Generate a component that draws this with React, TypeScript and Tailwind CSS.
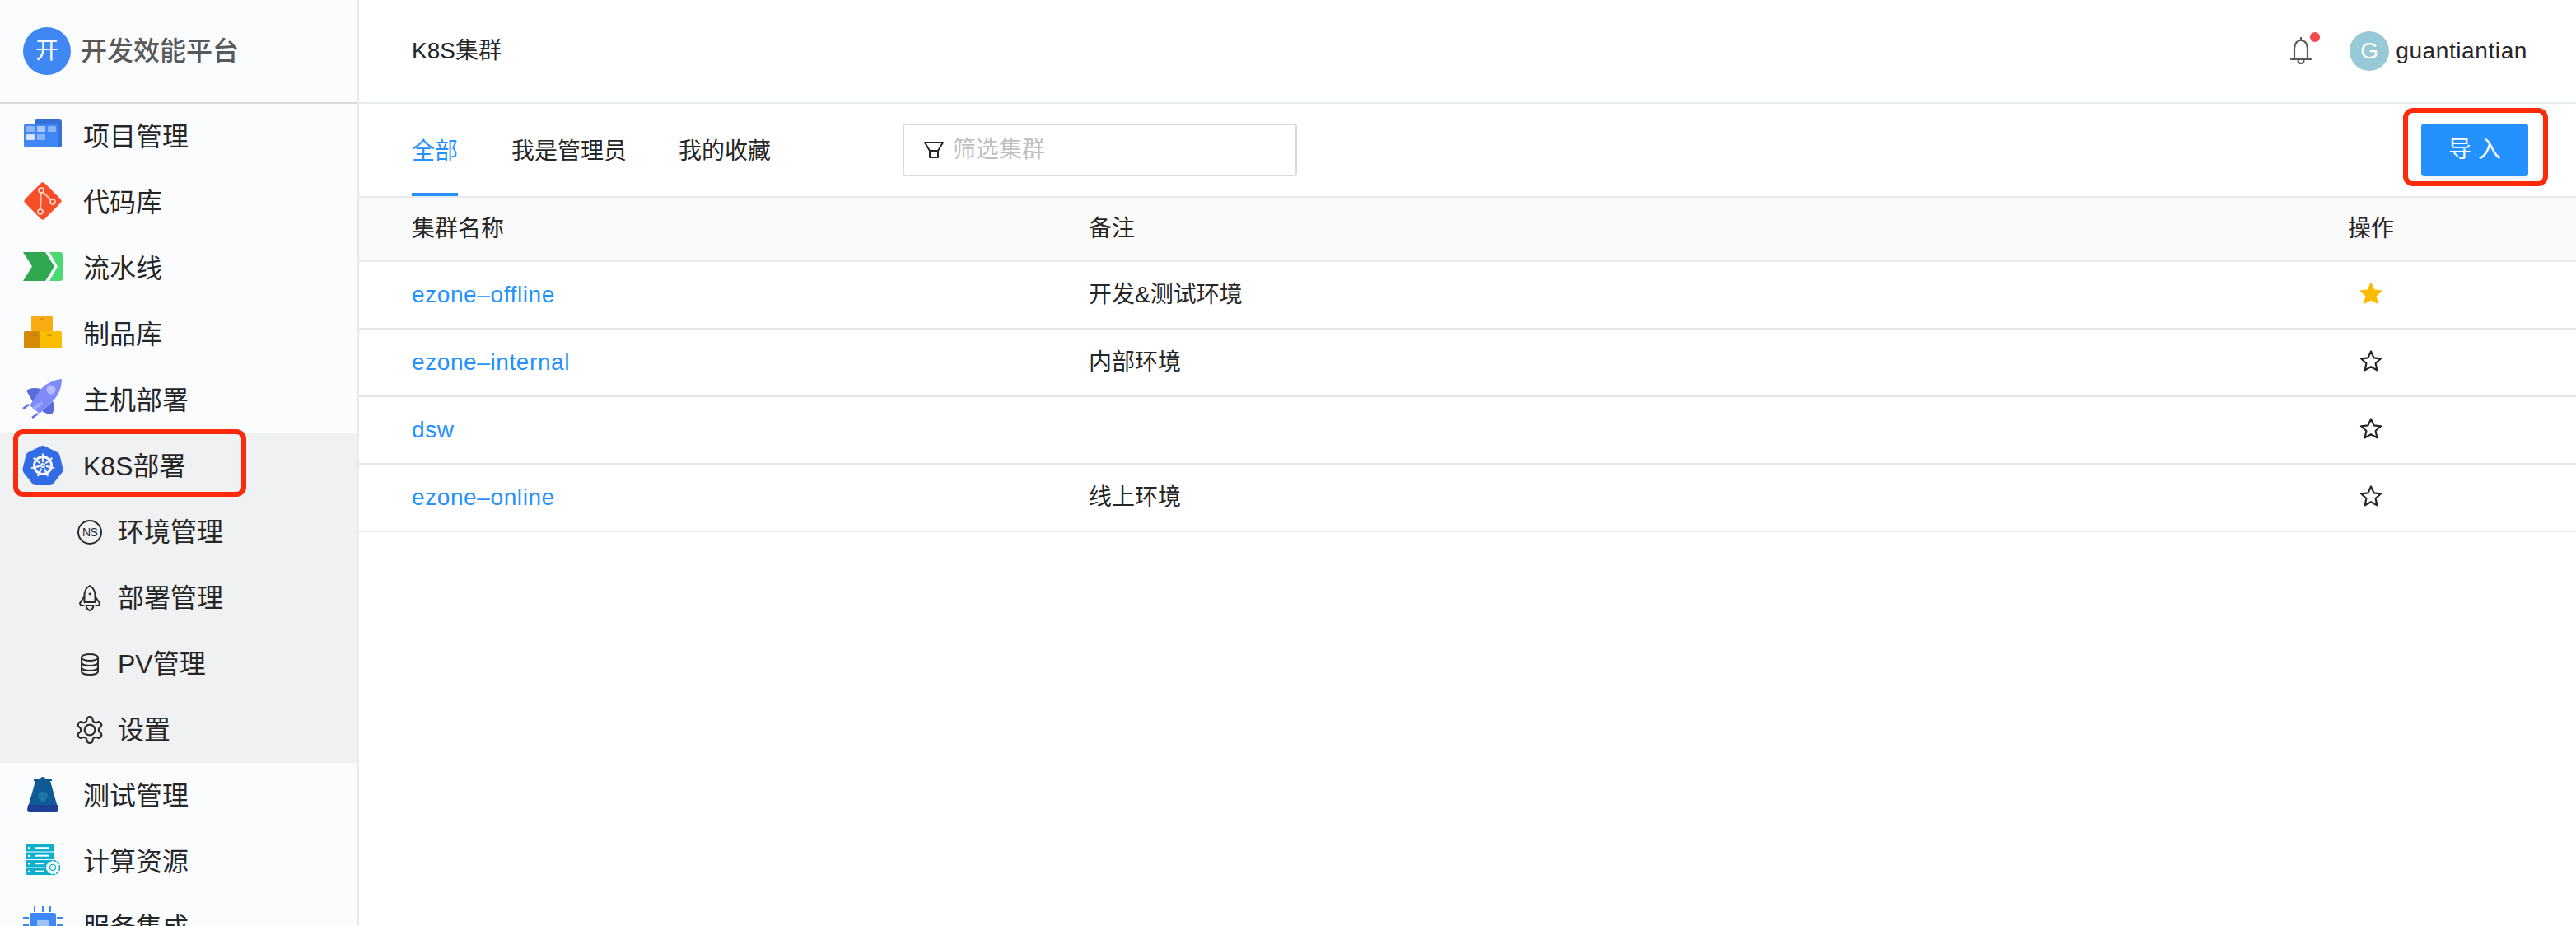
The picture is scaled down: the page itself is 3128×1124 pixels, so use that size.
import type { ReactNode } from "react";

const ProjectIcon = () => (
  <svg viewBox="0 0 48 48" className="h-12 w-12 overflow-visible">
    <path d="M14 6a3 3 0 0 1 3-3h27a3 3 0 0 1 3 3v28a3 3 0 0 1-3 3H20z" fill="#3470d8" />
    <path d="M1 11a3 3 0 0 1 3-3h39v26a3 3 0 0 1-3 3H4a3 3 0 0 1-3-3z" fill="#3f87f5" />
    <rect x="4" y="11" width="10" height="7" rx="1" fill="#8ab6f9" />
    <rect x="17" y="11" width="10" height="7" rx="1" fill="#a9c9fb" />
    <rect x="30" y="11" width="10" height="7" rx="1" fill="#8ab6f9" />
    <rect x="4" y="21" width="10" height="7" rx="1" fill="#d7e6fd" />
    <rect x="17" y="21" width="10" height="7" rx="1" fill="#8ab6f9" />
  </svg>
);

const CodeIcon = () => (
  <svg viewBox="0 0 48 48" className="h-12 w-12 overflow-visible">
    <rect x="7" y="5" width="34" height="34" rx="4" fill="#f74f28" transform="rotate(45 24 22)" />
    <path d="M22 9l-1 26M22 9l14 14" stroke="#fbc4b6" strokeWidth="2" fill="none" />
    <circle cx="22" cy="9" r="3" fill="#f74f28" stroke="#fde0d8" strokeWidth="1.6" />
    <circle cx="36" cy="23" r="3" fill="#f74f28" stroke="#fde0d8" strokeWidth="1.6" />
    <circle cx="21" cy="35" r="3" fill="#f74f28" stroke="#fde0d8" strokeWidth="1.6" />
  </svg>
);

const PipelineIcon = () => (
  <svg viewBox="0 0 48 48" className="h-12 w-12 overflow-visible">
    <path d="M32 4h13a3 3 0 0 1 3 3v29a3 3 0 0 1-3 3H32l10-17.5z" fill="#4cd972" />
    <path d="M0 4h27l11 17.5L27 39H0l11-17.5z" fill="#2fa84f" />
  </svg>
);

const PackageIcon = () => (
  <svg viewBox="0 0 48 48" className="h-12 w-12 overflow-visible">
    <rect x="10" y="1" width="26" height="19" rx="1.5" fill="#fbab14" />
    <rect x="1" y="20" width="21" height="21" rx="1.5" fill="#d58a05" />
    <rect x="21" y="20" width="26" height="21" rx="1.5" fill="#fbbd00" />
    <path d="M20 5h6M10 25h7M29 25h6" stroke="#b8790c" strokeWidth="1.2" />
  </svg>
);

const RocketIcon = () => (
  <svg viewBox="0 0 48 48" className="h-12 w-12 overflow-visible">
    <path d="M4 12c4-3 10-4 18-2L12 26z" fill="#5a6bdc" />
    <path d="M36 25c3 5 2 11-1 16-3 0-7-1-12-4z" fill="#5a6bdc" />
    <path d="M47 -2c0 12-5 21-12 28L20 40 8 30 22 10C28 3 38 -1 47 -2z" fill="#7e8cfb" />
    <circle cx="34" cy="11" r="5.5" fill="#b4bcfd" />
    <path d="M11 33l11-8 2 3-10 8z" fill="#a0abfc" />
    <path d="M0 34l7-5M11 45l7-5" stroke="#5a6bdc" strokeWidth="2.4" />
  </svg>
);

const K8sIcon = () => {
  const spokes = [0, 51.4, 102.8, 154.3, 205.7, 257.1, 308.6];
  return (
    <svg viewBox="0 0 48 48" className="h-12 w-12 overflow-visible">
      <path d="M21.8 -0.6a5 5 0 0 1 4.4 0l15.6 7.5a5 5 0 0 1 2.7 3.4l3.9 16.8a5 5 0 0 1-1 4.3L36.7 45a5 5 0 0 1-3.9 1.9H15.2a5 5 0 0 1-3.9-1.9L.6 31.4a5 5 0 0 1-1-4.3l3.9-16.8a5 5 0 0 1 2.7-3.4z" fill="#326ce5" />
      <circle cx="24" cy="23" r="10.5" fill="none" stroke="#f2f5fd" strokeWidth="3" />
      <circle cx="24" cy="23" r="3" fill="#f2f5fd" />
      <circle cx="24" cy="23" r="1" fill="#326ce5" />
      {spokes.map((a) => (
        <path key={a} d="M24 8.5v10.5" stroke="#f2f5fd" strokeWidth="2.2" transform={`rotate(${a} 24 23)`} />
      ))}
    </svg>
  );
};

const FlaskIcon = () => (
  <svg viewBox="0 0 48 48" className="h-12 w-12 overflow-visible">
    <circle cx="24" cy="4" r="3" fill="#0e5a94" />
    <path d="M13 4h22v2h-2l9 32H6L15 6h-2z" fill="#0e5a94" />
    <path d="M6 35h36l1 6a3 3 0 0 1-3 3H8a3 3 0 0 1-3-3z" fill="#1f3f94" />
    <path d="M24 19c4 0 6 2 6 5 0 3-3 5-4 7h-4c-1-2-4-4-4-7 0-3 2-5 6-5z" fill="#1d76a8" />
  </svg>
);

const ComputeIcon = () => (
  <svg viewBox="0 0 48 48" className="h-12 w-12 overflow-visible">
    {[3, 12.5, 22, 31.5].map((y, i) => (
      <g key={y}>
        <rect x="4" y={y} width="34" height="8.5" fill="#0fb0ce" />
        <rect x="6" y={y + 3.2} width="2.2" height="2.2" fill="#fff" />
        <rect x="14" y={y + 3.2} width={i < 2 ? 18 : 11} height="2" fill="#fff" />
      </g>
    ))}
    <circle cx="36" cy="31" r="8.5" fill="#fff" stroke="#0fb0ce" strokeWidth="1.6" strokeDasharray="4 1" />
    <circle cx="36" cy="31" r="3.6" fill="none" stroke="#0fb0ce" strokeWidth="1.4" />
  </svg>
);

const ChipIcon = () => (
  <svg viewBox="0 0 48 48" className="h-12 w-12 overflow-visible">
    <rect x="8" y="6" width="32" height="32" rx="3" fill="#3f87f5" />
    <rect x="17" y="15" width="14" height="14" rx="1" fill="#9cc2fa" />
    <path d="M14 -2v7M24 -2v7M33 -2v7M0 12h7M41 12h7M0 21h7M41 21h7" stroke="#3f87f5" strokeWidth="2" />
  </svg>
);

const NsIcon = () => (
  <div className="flex h-[30px] w-[30px] items-center justify-center rounded-full border-2 border-[#2b2b2b] text-[14px] tracking-tighter text-[#2b2b2b]">
    NS
  </div>
);

const DeployIcon = () => (
  <svg viewBox="0 0 26 32" className="h-8 w-[26px]" fill="none" stroke="#2b2b2b" strokeWidth="2" strokeLinejoin="round">
    <path d="M13 1c4 2.500 6.500 6.500 6.500 11v9h-13v-9C6.500 7.500 9 3.500 13 1z" />
    <path d="M6.500 14L1 22l1 3h4.500M19.500 14L25 22l-1 3h-4.500" />
    <path d="M8.500 25c.5 3 2.500 5.500 4.500 6 2-.5 4-3 4.500-6z" />
    <circle cx="13" cy="11" r="1.4" fill="#2b2b2b" stroke="none" />
  </svg>
);

const DbIcon = () => (
  <svg viewBox="0 0 22 27" className="h-[27px] w-[22px]" fill="none" stroke="#2b2b2b" strokeWidth="2">
    <ellipse cx="11" cy="5" rx="10" ry="4" />
    <path d="M1 5v17c0 2.500 4.500 4 10 4s10-1.500 10-4V5" />
    <path d="M1 11c0 2.500 4.500 4 10 4s10-1.500 10-4M1 17c0 2.500 4.500 4 10 4s10-1.500 10-4" />
  </svg>
);

const GearIcon = () => (
  <svg viewBox="0 0 24 24" className="h-[38px] w-[38px]" fill="none" stroke="#2b2b2b" strokeWidth="1.4" strokeLinejoin="round">
    <path d="M12.22 2h-.44a2 2 0 0 0-2 2v.18a2 2 0 0 1-1 1.73l-.43.25a2 2 0 0 1-2 0l-.15-.08a2 2 0 0 0-2.73.73l-.22.38a2 2 0 0 0 .73 2.73l.15.1a2 2 0 0 1 1 1.72v.51a2 2 0 0 1-1 1.74l-.15.09a2 2 0 0 0-.73 2.73l.22.38a2 2 0 0 0 2.73.73l.15-.08a2 2 0 0 1 2 0l.43.25a2 2 0 0 1 1 1.73V20a2 2 0 0 0 2 2h.44a2 2 0 0 0 2-2v-.18a2 2 0 0 1 1-1.73l.43-.25a2 2 0 0 1 2 0l.15.08a2 2 0 0 0 2.73-.73l.22-.39a2 2 0 0 0-.73-2.73l-.15-.08a2 2 0 0 1-1-1.74v-.5a2 2 0 0 1 1-1.74l.15-.09a2 2 0 0 0 .73-2.73l-.22-.38a2 2 0 0 0-2.73-.73l-.15.08a2 2 0 0 1-2 0l-.43-.25a2 2 0 0 1-1-1.73V4a2 2 0 0 0-2-2z" />
    <circle cx="12" cy="12" r="4" />
  </svg>
);

const BellIcon = () => (
  <svg viewBox="0 0 26 34" className="h-[34px] w-[26px]" fill="none" stroke="#595959" strokeWidth="2.2" strokeLinecap="round">
    <path d="M13 1v3" />
    <path d="M5 27V14C5 8 8.500 4 13 4s8 4 8 10v13" />
    <path d="M1 27h24" />
    <path d="M9.500 28.500a3.500 3.500 0 0 0 7 0" />
  </svg>
);

const FilterIcon = () => (
  <svg viewBox="0 0 24 20" className="h-5 w-6" fill="none" stroke="#262626" strokeWidth="2" strokeLinejoin="round">
    <path d="M1 1h22l-6 10v8H7v-8z" />
    <path d="M7 11h10" />
  </svg>
);

const StarIcon = ({ filled }: { filled?: boolean }) => (
  <svg viewBox="0 0 28 28" className="h-7 w-7" fill={filled ? "#fdbb00" : "none"} stroke={filled ? "#fdbb00" : "#262626"} strokeWidth="2.2" strokeLinejoin="round">
    <path d="M14 2.500l3.500 7.900 8.500.9-6.400 5.700 1.800 8.400L14 21.200l-7.400 4.200 1.800-8.400L2 11.300l8.500-.9z" />
  </svg>
);

function NavItem({ icon, label }: { icon: ReactNode; label: string }) {
  return (
    <div className="flex h-20 shrink-0 items-center pl-7">
      <div className="flex w-[73px] shrink-0">{icon}</div>
      <span>{label}</span>
    </div>
  );
}

function SubItem({ icon, label }: { icon: ReactNode; label: string }) {
  return (
    <div className="flex h-20 shrink-0 items-center pl-[90px]">
      <div className="flex w-[38px] shrink-0 justify-center">{icon}</div>
      <span className="ml-[15px]">{label}</span>
    </div>
  );
}

const rows = [
  { name: "ezone–offline", note: "开发&测试环境", starred: true },
  { name: "ezone–internal", note: "内部环境" },
  { name: "dsw", note: "" },
  { name: "ezone–online", note: "线上环境" },
];

export default function App() {
  return (
    <div className="relative flex h-[1124px] w-[3128px] overflow-hidden bg-white font-['Liberation_Sans','Noto_Sans_CJK_SC',sans-serif] text-[28px] text-[#262626]">
      <aside className="flex w-[436px] shrink-0 flex-col border-r-2 border-[#e8eaed] bg-[#fbfcfe] text-[32px]">
        <div className="flex h-[126px] shrink-0 items-center gap-3 border-b-2 border-[#d9dadc] pl-7">
          <div className="flex h-[58px] w-[58px] items-center justify-center rounded-full bg-[#3f87f5] text-[28px] text-white">
            开
          </div>
          <span className="font-medium text-[#595959]">开发效能平台</span>
        </div>
        <NavItem icon={<ProjectIcon />} label="项目管理" />
        <NavItem icon={<CodeIcon />} label="代码库" />
        <NavItem icon={<PipelineIcon />} label="流水线" />
        <NavItem icon={<PackageIcon />} label="制品库" />
        <NavItem icon={<RocketIcon />} label="主机部署" />
        <div className="flex shrink-0 flex-col bg-[#f0f1f3]">
          <NavItem icon={<K8sIcon />} label="K8S部署" />
          <SubItem icon={<NsIcon />} label="环境管理" />
          <SubItem icon={<DeployIcon />} label="部署管理" />
          <SubItem icon={<DbIcon />} label="PV管理" />
          <SubItem icon={<GearIcon />} label="设置" />
        </div>
        <NavItem icon={<FlaskIcon />} label="测试管理" />
        <NavItem icon={<ComputeIcon />} label="计算资源" />
        <NavItem icon={<ChipIcon />} label="服务集成" />
      </aside>

      <main className="flex min-w-0 flex-1 flex-col">
        <header className="flex h-[126px] shrink-0 items-center justify-between border-b-2 border-[#e6eaee] pl-16 pr-[59px]">
          <span>K8S集群</span>
          <div className="flex items-center">
            <div className="relative mr-[46px] flex">
              <BellIcon />
              <span className="absolute -right-[10px] -top-[6px] h-3 w-3 rounded-full bg-[#f5474f]" />
            </div>
            <div className="mr-2 flex h-12 w-12 items-center justify-center rounded-full bg-[#98c9d6] text-[28px] text-white">
              G
            </div>
            <span className="tracking-[0.6px]">guantiantian</span>
          </div>
        </header>

        <div className="flex h-[114px] shrink-0 items-stretch border-b-2 border-[#e6eaee] pl-16 pr-[58px]">
          <div className="flex items-center border-b-4 border-[#2590ff] pt-2 text-[#2590ff]">全部</div>
          <div className="ml-[65px] flex items-center pt-1">我是管理员</div>
          <div className="ml-[63px] flex items-center pt-1">我的收藏</div>
          <div className="ml-[160px] mt-6 flex h-16 w-[479px] items-center rounded border-2 border-[#d9d9d9] pl-6 text-[#bfbfbf]">
            <FilterIcon />
            <span className="ml-[11px]">筛选集群</span>
          </div>
          <button className="ml-auto mt-6 h-16 w-[130px] rounded bg-[#2590ff] text-white shadow-[0_4px_0_rgba(0,0,0,0.04)]">
            导 入
          </button>
        </div>

        <div className="grid h-[78px] shrink-0 grid-cols-[822px_1529px_1fr] items-center border-b-2 border-[#e8e8e8] bg-[#fafafa] pl-16">
          <span>集群名称</span>
          <span>备注</span>
          <span>操作</span>
        </div>
        {rows.map((row) => (
          <div key={row.name} className="grid h-[82px] shrink-0 grid-cols-[822px_1529px_1fr] items-center border-b-2 border-[#e8e8e8] pl-16">
            <span className="tracking-[0.6px] text-[#2590ff]">{row.name}</span>
            <span>{row.note}</span>
            <span className="flex w-14 justify-center pb-1">
              <StarIcon filled={row.starred} />
            </span>
          </div>
        ))}
      </main>

      {/* red annotation boxes drawn over the screenshot */}
      <div className="absolute left-4 top-[521px] h-[82px] w-[283px] rounded-xl border-[6px] border-[#fa2a0a]" />
      <div className="absolute left-[2918px] top-[131px] h-[95px] w-[176px] rounded-xl border-[6px] border-[#fa2a0a]" />
    </div>
  );
}
